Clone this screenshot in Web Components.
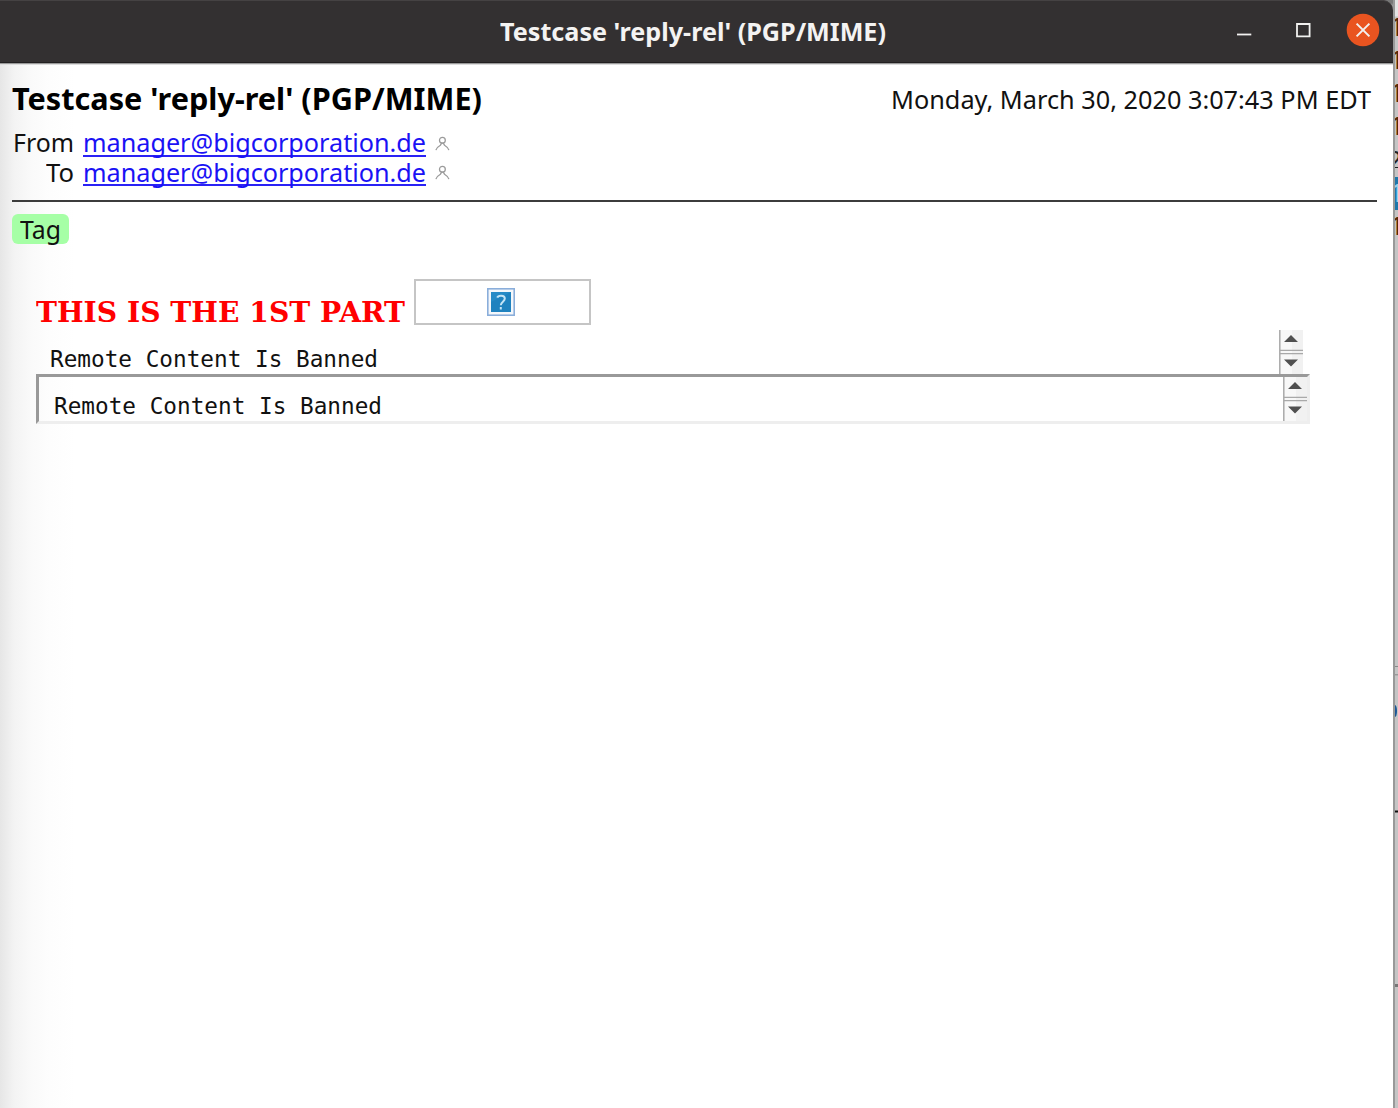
<!DOCTYPE html>
<html lang="en">
<head>
<meta charset="utf-8">
<title>Testcase 'reply-rel' (PGP/MIME)</title>
<style>
html,body{margin:0;height:100%;overflow:hidden;background:#fff}
body{font-family:"Noto Sans","Open Sans",sans-serif;color:#111}
</style>
</head>
<body>
<mail-desktop></mail-desktop>
<script>
const define = (name, html, init) => customElements.define(name, class extends HTMLElement {
  connectedCallback() {
    if (this.shadowRoot) return;
    const t = document.createElement('template');
    t.innerHTML = html;
    this.attachShadow({mode: 'open'}).append(t.content.cloneNode(true));
    if (init) init.call(this, this.shadowRoot);
  }
});

// A single line of text set to a given width.
define('fit-text', `<style>
:host{display:block;flex:none;white-space:pre}
span{display:inline-block;transform-origin:0 50%}
</style><span><slot></slot></span>`, function (root) {
  const w = +this.getAttribute('width');
  const s = root.querySelector('span');
  this.style.width = w + 'px';
  s.style.transform = `scaleX(${w / s.getBoundingClientRect().width})`;
});

define('title-bar', `<style>
:host{display:grid;grid-template-columns:1fr auto 1fr;align-items:center;height:63px;flex:none;background:#333031;color:#f4f3f2;border-radius:0 10px 0 0;box-shadow:inset 0 1px #454243,inset 0 -1px #222021,0 1px #999,0 2px #ddd;font:bold 24.5px/63px "Noto Sans",sans-serif}
fit-text{grid-column:2;margin-right:7px}
.buttons{display:flex;justify-content:flex-end;padding:0 13.500px 3px 0}
svg{display:block;width:148px;height:34px}
</style>
<fit-text width="386"><slot></slot></fit-text>
<div class="buttons"><svg viewBox="0 0 148 34" fill="none" stroke="#f2f1f0" stroke-width="1.8">
<path d="M5 21.5h14.3"/><path d="M65 11h12.6v12.4H65z"/>
<circle cx="131" cy="17" r="16.3" fill="#e95420" stroke="none"/>
<path d="M124.6 10.6l12.8 12.8M137.4 10.6l-12.8 12.8" stroke-width="2"/></svg></div>`);

define('contact-icon', `<style>:host{display:block;flex:none}svg{display:block}</style>
<svg width="15" height="15" viewBox="0 0 15 15" fill="none" stroke="#9b9b9b" stroke-width="1.3"><circle cx="7.4" cy="4.2" r="2.900"/><path d="M.9 14.200C1.500 11.800 3 10.500 5.400 9.200L6.600 7.200h1.700l1.200 2c2.300 1.300 3.800 2.700 4.400 5"/></svg>`);

define('address-row', `<style>
:host{display:flex;height:29.6px;line-height:29.6px;font-size:25px}
.label{width:62px;display:flex;justify-content:flex-end;margin-right:9px}
a{color:#1a12f5;border-bottom:2px solid #2a22f5;height:26.400px;display:block;margin-right:8.5px}
a fit-text{height:26.400px}
contact-icon{margin-top:7.500px}
</style>
<div class="label"><fit-text></fit-text></div><a><fit-text width="343"><slot></slot></fit-text></a><contact-icon></contact-icon>`, function (root) {
  const l = document.createElement('fit-text');
  l.setAttribute('width', this.getAttribute('label-width'));
  l.textContent = this.getAttribute('label');
  root.querySelector('.label').replaceChildren(l);
});

define('mail-header', `<style>
:host{display:block;flex:none;padding:14px 16px 0 12px}
.top{display:flex;justify-content:space-between;height:43px;line-height:43px}
.subject{font-size:31px;font-weight:bold;color:#000;line-height:43px}
.date{font-size:24.8px;line-height:45px;margin-right:6px}
.rows{padding:8.300px 0 .2px}
.rule{height:2px;background:#3c3c3c;margin-top:12px}
</style>
<div class="top"><fit-text class="subject" width="470"><slot name="subject"></slot></fit-text><fit-text class="date" width="480"><slot name="date"></slot></fit-text></div>
<div class="rows"><slot></slot></div><div class="rule"></div>`);

define('mail-tag', `<style>:host{display:flex;justify-content:center;flex:none;width:57.500px;height:30px;margin:12px 0 0 11.500px;border-radius:6px;background:#a6ffa6;font-size:24.800px;line-height:30px}</style><fit-text width="41"><slot></slot></fit-text>`);

define('missing-image', `<style>
:host{display:flex;align-items:center;justify-content:center;box-sizing:border-box;width:177px;height:46px;border:2px solid #c5c5c5;padding-right:3px}
svg{display:block}</style>
<svg width="28" height="28" viewBox="0 0 28 28"><rect x=".8" y=".8" width="26.400" height="26.400" fill="#f4f7fb" stroke="#8aaedb" stroke-width="1.600"/><rect x="4" y="4" width="20" height="20" fill="#268bc7"/><path d="M4 24V14L24 4v20z" fill="#1f82bf"/><path d="M10.300 9.600C11 7.300 17.800 6.800 17.800 10.600c0 3-4 3.200-4 6.700M13.800 19v2.600" fill="none" stroke="#c4e4f5" stroke-width="2"/></svg>`);

define('scroll-bar', `<style>:host{display:block;flex:none;width:24px;height:44px}svg{display:block}</style>
<svg width="24" height="44" viewBox="0 0 24 44"><rect width="24" height="44" fill="#f8f8f8"/><path d="M13 0h11v44H13z" fill="#f1f1f1"/><path d="M.8 0v44" stroke="#a9a9a9" stroke-width="1.500"/><path d="M1 20.300h23M1 23.700h23" stroke="#a9a9a9" stroke-width="1.300"/><path d="M5 12l7-7 7 7zM5 29.500l7 7 7-7z" fill="#505050"/></svg>`);

define('inline-frame', `<style>
:host{display:flex;justify-content:space-between;box-sizing:border-box;height:44px;width:1267px;padding-left:14px;font:22.500px/26px "DejaVu Sans Mono",monospace}
:host([bordered]){width:1274px;height:50px;border:3px solid;border-color:#999 #eee #eee #999;padding-left:14.500px}
:host([bordered]) scroll-bar{margin-right:.5px}
fit-text{padding-top:16px}
</style><fit-text width="328"><slot></slot></fit-text><scroll-bar></scroll-bar>`);

define('mail-body', `<style>
:host{display:block;padding:35px 0 0 36px}
.line{display:flex;height:51px}
.head{font:bold 28px/34px "DejaVu Serif",serif;color:#f00;margin:17px 9px 0 0}
</style><div class="line"><fit-text class="head" width="369"><slot name="heading"></slot></fit-text><missing-image></missing-image></div><slot></slot>`);

// The sliver of the message list showing behind the window.
define('list-edge', `<style>
:host{display:flex;flex-direction:column;box-sizing:border-box;width:6px;height:1108px;overflow:hidden;background:linear-gradient(#e4e4e4 0 16px,#c5c5c5 17px);border-left:2px solid #999;font:24.500px/31px "Noto Sans",sans-serif;color:#572507}
:host div{height:33.300px;flex:none;text-indent:-5px;white-space:nowrap}
.first{margin-top:10.500px}
:host .two{color:#222;border-bottom:1.500px solid #222;box-sizing:border-box;height:24px;margin-bottom:9.300px;line-height:31px;text-indent:-7px;overflow:hidden}
.sel{background:#1f77aa;color:#9dd0e8}
svg{display:block;margin-top:418.500px;flex:none}
</style><div class="first">1</div><div>1</div><div>1</div><div>1</div><div class="two">2</div><div class="sel">1</div><div>1</div>
<svg width="4" height="326" viewBox="0 662 4 326"><path d="M0 666.500h4M0 674.800h4" stroke="#888"/><ellipse cx="0" cy="711" rx="2" ry="6" fill="#1c5796"/><path d="M3 718h1v5H3z" fill="#c08850"/><path d="M0 811.500h4" stroke="#111" stroke-width="2"/><path d="M0 985.500h4" stroke="#777" stroke-width="3"/></svg>`);

define('mail-desktop', `<style>
:host{display:flex;width:1398px;height:1108px;overflow:hidden;background:linear-gradient(#777 0 3px,#c0c0c0 8px)}
main{display:flex;flex-direction:column;width:1393px;height:1108px;flex:none;background:linear-gradient(90deg,#e6e6e6 0,#f3f3f3 14px,#fafafa 32px,#fdfdfd 50px,#fff 75px);border-radius:0 10px 0 0}
list-edge{flex:none;width:5px}
</style>
<main>
<title-bar>Testcase 'reply-rel' (PGP/MIME)</title-bar>
<mail-header><span slot="subject">Testcase 'reply-rel' (PGP/MIME)</span><span slot="date">Monday, March 30, 2020 3:07:43 PM EDT</span>
<address-row label="From" label-width="61">manager@bigcorporation.de</address-row>
<address-row label="To" label-width="28">manager@bigcorporation.de</address-row>
</mail-header>
<mail-tag>Tag</mail-tag>
<mail-body><span slot="heading">THIS IS THE 1ST PART</span>
<inline-frame>Remote Content Is Banned</inline-frame>
<inline-frame bordered>Remote Content Is Banned</inline-frame>
</mail-body>
</main><list-edge></list-edge>`);
</script>
</body>
</html>
